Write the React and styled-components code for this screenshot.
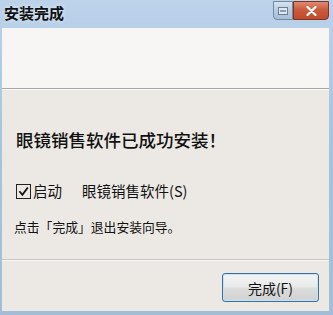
import React from 'react'
import styled, { createGlobalStyle } from 'styled-components'

const Global = createGlobalStyle`
  html, body { margin: 0; padding: 0; }
  body {
    width: 333px;
    height: 315px;
    overflow: hidden;
    font-family: "Noto Sans CJK SC", "Liberation Sans", sans-serif;
  }
`

const Window = styled.div`
  width: 333px;
  height: 315px;
  box-sizing: border-box;
  display: flex;
  flex-direction: column;
  background: linear-gradient(180deg, #bcd3ea 0%, #a9c4de 40%, #a2bdd8 100%);
  padding: 0 4px 4px 2px;
`

const TitleBar = styled.div`
  height: 28px;
  display: flex;
  align-items: flex-start;
  justify-content: space-between;
`

const Title = styled.div`
  font-size: 15px;
  font-weight: 700;
  color: #111;
  padding: 4px 0 0 2px;
  line-height: 18px;
  text-shadow: 0 0 4px rgba(255,255,255,0.7);
`

const Controls = styled.div`
  display: flex;
  margin-top: 1px;
`

const MinBtn = styled.span`
  height: 19px;
  width: 20px;
  box-sizing: border-box;
  display: flex;
  align-items: center;
  justify-content: center;
  border: 1px solid #6f8aa6;
  border-radius: 0 0 0 4px;
  background: linear-gradient(180deg, #d6e3ef 0%, #b6cbe0 50%, #a8bfd6 100%);
`

const CloseBtn = styled.span`
  height: 19px;
  width: 36px;
  box-sizing: border-box;
  display: flex;
  align-items: center;
  justify-content: center;
  border: 1px solid #7e3424;
  border-radius: 0 0 4px 0;
  background: linear-gradient(180deg, #e08b72 0%, #cc5a3c 45%, #bf4a2c 100%);
`

const Client = styled.div`
  flex: 1;
  display: flex;
  flex-direction: column;
  background: #ece9e4;
`

const Banner = styled.div`
  height: 60px;
  background: #f7f6f4;
  border-bottom: 1px solid #a9a9a9;
  box-shadow: 0 1px 0 #fbfbfa;
`

const Body = styled.div`
  flex: 1;
  display: flex;
  flex-direction: column;
  padding: 0 12px;
`

const Heading = styled.div`
  font-size: 17.5px;
  font-weight: 500;
  color: #111;
  margin-top: 40px;
  line-height: 22px;
  padding-left: 2px;
`

const CheckRow = styled.label`
  display: flex;
  align-items: center;
  font-size: 14.5px;
  color: #111;
  margin-top: 30px;
  padding-left: 2px;
  line-height: 20px;
`

const Box = styled.span`
  width: 15px;
  height: 15px;
  box-sizing: border-box;
  border: 1.6px solid #222;
  display: inline-flex;
  align-items: center;
  justify-content: center;
  margin-right: 2px;
`

const Gap = styled.span`
  display: inline-block;
  width: 20px;
`

const Note = styled.div`
  font-size: 12.8px;
  color: #111;
  margin-top: 17px;
  line-height: 18px;
`

const Footer = styled.div`
  height: 52px;
  border-top: 1px solid #c9c7c3;
  box-shadow: inset 0 1px 0 #f8f7f5;
  display: flex;
  justify-content: flex-end;
  align-items: flex-start;
  padding: 13px 10px 0 0;
  box-sizing: border-box;
`

const Button = styled.button`
  width: 97px;
  height: 29px;
  border: 1.5px solid #3d6f9c;
  border-radius: 3px;
  background: linear-gradient(180deg, #f4f4f4 0%, #e9e9e9 48%, #dcdcdc 52%, #d2d2d2 100%);
  box-shadow: inset 0 0 0 1px #c4e3f6;
  font-family: "Noto Sans CJK SC", "Liberation Sans", sans-serif;
  font-size: 14px;
  color: #111;
  padding: 0;
`

export default function App() {
  return (
    <>
      <Global />
      <Window>
        <TitleBar>
          <Title>安装完成</Title>
          <Controls>
            <MinBtn>
              <svg width="10" height="8" viewBox="0 0 10 8">
                <rect x="0.5" y="0.5" width="9" height="7" fill="#dfe8f1" stroke="#6a7e93" />
                <rect x="2" y="3" width="6" height="2" fill="#8b9db0" />
              </svg>
            </MinBtn>
            <CloseBtn>
              <svg width="11" height="10" viewBox="0 0 11 10">
                <path d="M1.5 1 L9.5 9 M9.5 1 L1.5 9" stroke="#fff" strokeWidth="2.2" strokeLinecap="round" />
              </svg>
            </CloseBtn>
          </Controls>
        </TitleBar>
        <Client>
          <Banner />
          <Body>
            <Heading>眼镜销售软件已成功安装！</Heading>
            <CheckRow>
              <Box>
                <svg width="11" height="11" viewBox="0 0 10 10">
                  <path d="M1.3 4.8 L4 8 L8.9 1.3" fill="none" stroke="#111" strokeWidth="1.6" />
                </svg>
              </Box>
              启动<Gap />眼镜销售软件(S)
            </CheckRow>
            <Note>点击「完成」退出安装向导。</Note>
          </Body>
          <Footer>
            <Button>完成(F)</Button>
          </Footer>
        </Client>
      </Window>
    </>
  )
}
